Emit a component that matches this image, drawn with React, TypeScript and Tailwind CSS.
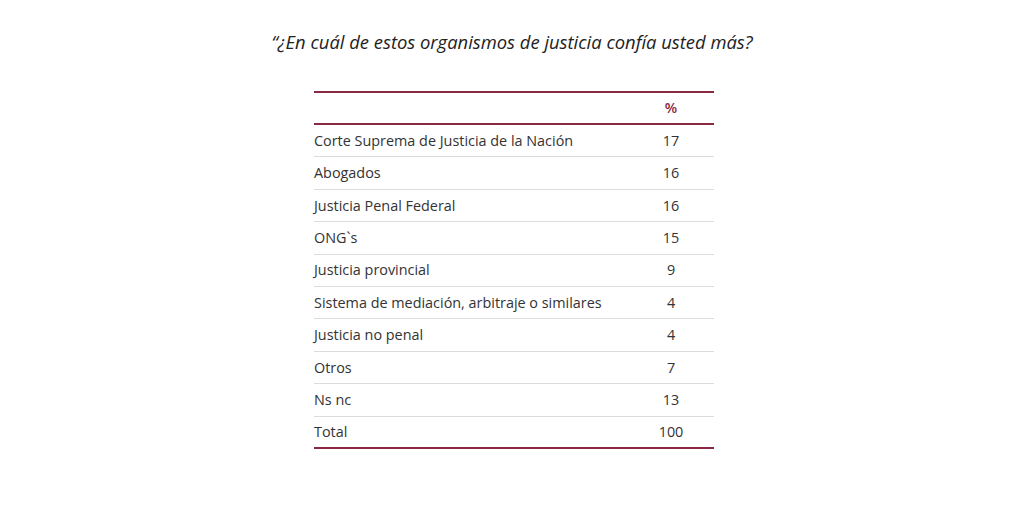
import React from "react";

const rows: [string, string][] = [
  ["Corte Suprema de Justicia de la Nación", "17"],
  ["Abogados", "16"],
  ["Justicia Penal Federal", "16"],
  ["ONG`s", "15"],
  ["Justicia provincial", "9"],
  ["Sistema de mediación, arbitraje o similares", "4"],
  ["Justicia no penal", "4"],
  ["Otros", "7"],
  ["Ns nc", "13"],
  ["Total", "100"],
];

export default function App() {
  return (
    <div
      className="w-[1024px] h-[530px] bg-white flex flex-col items-center text-[#333333]"
      style={{ fontFamily: '"Open Sans", "Noto Sans", sans-serif' }}
    >
      <h1 className="mt-[29px] h-[26px] text-[18.4px] leading-[26px] italic text-[#222222]">
        “¿En cuál de estos organismos de justicia confía usted más?
      </h1>
      <div className="mt-[36px] w-[400px] ml-[4px] border-t-2 border-t-[#8b2942]">
        <div className="flex h-[32px] items-center border-b-2 border-b-[#8b2942]">
          <div className="flex-1" />
          <div className="w-[86px] text-center text-[14.4px] font-semibold text-[#8b2942]">%</div>
        </div>
        {rows.map(([label, value], i) => (
          <div
            key={label}
            className={`flex h-[32.4px] items-center text-[14.4px] ${
              i === rows.length - 1 ? "border-b-2 border-b-[#8b2942]" : "border-b border-b-[#dcdcdc]"
            }`}
          >
            <div className="flex-1">{label}</div>
            <div className="w-[86px] text-center">{value}</div>
          </div>
        ))}
      </div>
    </div>
  );
}
